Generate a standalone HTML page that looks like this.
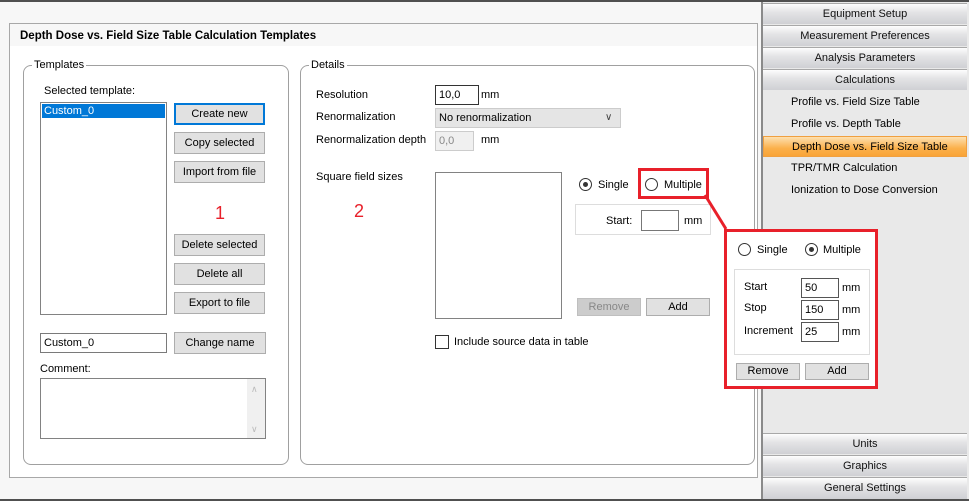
<!DOCTYPE html>
<html><head><meta charset="utf-8"><style>
*{box-sizing:border-box;margin:0;padding:0}
body{width:969px;height:501px;overflow:hidden;background:#f7f7f7;font-family:"Liberation Sans",sans-serif;font-size:11px;color:#000;position:relative}
.a{position:absolute}
.t{position:absolute;white-space:nowrap;line-height:14px}
.btn{position:absolute;background:#e1e1e1;border:1px solid #adadad;text-align:center;line-height:20px;white-space:nowrap}
.inp{position:absolute;background:#fff;border:1px solid #7a7a7a;padding-left:3px;line-height:19px}
.grp{position:absolute;border:1px solid #a0a0a0;border-radius:8px}
.hd{position:absolute;left:763px;width:204px;height:21px;background:linear-gradient(#fdfdfd,#e4e4e6 40%,#cfd0d4);border-top:1px solid #a8a8a8;text-align:center;line-height:21px;color:#111}
.rad{position:absolute;width:13px;height:13px;border:1px solid #333;border-radius:50%;background:#fff}
.rad.on::after{content:"";position:absolute;left:3px;top:3px;width:5px;height:5px;border-radius:50%;background:#333}
.it{position:absolute;left:791px;line-height:14px;white-space:nowrap}
</style></head><body>
<div class="a" style="left:0;top:0;width:969px;height:2px;background:#505050"></div>
<div class="a" style="left:0;top:499px;width:969px;height:2px;background:#505050"></div>
<div class="a" style="left:9px;top:23px;width:749px;height:455px;background:#fff;border:1px solid #a8a8a8"></div>
<div class="a" style="left:10px;top:24px;width:747px;height:22px;background:#f7f7f7"></div>
<div class="t" style="left:20px;top:29px;font-weight:bold;font-size:11.5px">Depth Dose vs. Field Size Table Calculation Templates</div>
<div class="grp" style="left:23px;top:65px;width:266px;height:400px"></div>
<div class="t" style="left:32px;top:58px;background:#fff;padding:0 2px">Templates</div>
<div class="t" style="left:44px;top:84px">Selected template:</div>
<div class="a" style="left:40px;top:102px;width:127px;height:213px;border:1px solid #828282;background:#fff"></div>
<div class="a" style="left:42px;top:104px;width:123px;height:14px;background:#0078d7"></div>
<div class="t" style="left:44px;top:104px;color:#fff">Custom_0</div>
<div class="btn" style="left:174px;top:103px;width:91px;height:22px;border:2px solid #0078d7;line-height:18px">Create new</div>
<div class="btn" style="left:174px;top:132px;width:91px;height:22px">Copy selected</div>
<div class="btn" style="left:174px;top:161px;width:91px;height:22px">Import from file</div>
<div class="t" style="left:215px;top:203px;color:#e8202a;font-size:18px;line-height:20px">1</div>
<div class="btn" style="left:174px;top:234px;width:91px;height:22px">Delete selected</div>
<div class="btn" style="left:174px;top:263px;width:91px;height:22px">Delete all</div>
<div class="btn" style="left:174px;top:292px;width:91px;height:22px">Export to file</div>
<div class="inp" style="left:40px;top:333px;width:127px;height:20px;line-height:18px">Custom_0</div>
<div class="btn" style="left:174px;top:332px;width:92px;height:22px">Change name</div>
<div class="t" style="left:40px;top:362px">Comment:</div>
<div class="a" style="left:40px;top:378px;width:226px;height:61px;border:1px solid #828282;background:#fff"></div>
<div class="a" style="left:247px;top:379px;width:18px;height:59px;background:#f0f0f0"></div>
<div class="t" style="left:251px;top:382px;color:#bbb;font-size:9px">&#8743;</div>
<div class="t" style="left:251px;top:422px;color:#bbb;font-size:9px">&#8744;</div>
<div class="grp" style="left:300px;top:65px;width:455px;height:400px"></div>
<div class="t" style="left:309px;top:58px;background:#fff;padding:0 2px">Details</div>
<div class="t" style="left:316px;top:88px">Resolution</div>
<div class="inp" style="left:435px;top:85px;width:44px;height:20px;border-color:#333;line-height:18px">10,0</div>
<div class="t" style="left:481px;top:88px">mm</div>
<div class="t" style="left:316px;top:110px">Renormalization</div>
<div class="a" style="left:435px;top:108px;width:186px;height:20px;background:#e5e5e5;border:1px solid #ccc"></div>
<div class="t" style="left:439px;top:111px">No renormalization</div>
<div class="t" style="left:605px;top:111px;font-size:10px;color:#444">&#8744;</div>
<div class="t" style="left:316px;top:133px">Renormalization depth</div>
<div class="inp" style="left:435px;top:131px;width:39px;height:20px;background:#f0f0f0;border-color:#ccc;color:#888;line-height:18px">0,0</div>
<div class="t" style="left:481px;top:133px">mm</div>
<div class="t" style="left:316px;top:170px">Square field sizes</div>
<div class="t" style="left:354px;top:201px;color:#e8202a;font-size:18px;line-height:20px">2</div>
<div class="a" style="left:435px;top:172px;width:127px;height:147px;border:1px solid #828282;background:#fff"></div>
<div class="rad on" style="left:579px;top:178px"></div>
<div class="t" style="left:598px;top:178px">Single</div>
<div class="rad" style="left:645px;top:178px"></div>
<div class="t" style="left:664px;top:178px">Multiple</div>
<div class="a" style="left:638px;top:168px;width:71px;height:31px;border:3px solid #e8202a"></div>
<div class="a" style="left:575px;top:204px;width:136px;height:31px;border:1px solid #ddd"></div>
<div class="t" style="left:606px;top:214px">Start:</div>
<div class="inp" style="left:641px;top:210px;width:38px;height:21px;border-color:#777"></div>
<div class="t" style="left:684px;top:214px">mm</div>
<div class="btn" style="left:577px;top:298px;width:64px;height:18px;line-height:16px;background:#ccc;border-color:#bfbfbf;color:#888">Remove</div>
<div class="btn" style="left:646px;top:298px;width:64px;height:18px;line-height:16px">Add</div>
<div class="a" style="left:435px;top:335px;width:14px;height:14px;border:1px solid #333;background:#fff"></div>
<div class="t" style="left:454px;top:335px">Include source data in table</div>
<svg class="a" style="left:700px;top:193px" width="30" height="40"><line x1="5" y1="2" x2="26" y2="36" stroke="#e8202a" stroke-width="3"/></svg>
<div class="a" style="left:761px;top:2px;width:208px;height:497px;background:#e9e9e9;border-left:2px solid #8a8a8a"></div>
<div class="hd" style="top:3px">Equipment Setup</div>
<div class="hd" style="top:25px">Measurement Preferences</div>
<div class="hd" style="top:47px">Analysis Parameters</div>
<div class="hd" style="top:69px">Calculations</div>
<div class="it" style="top:95px">Profile vs. Field Size Table</div>
<div class="it" style="top:117px">Profile vs. Depth Table</div>
<div class="a" style="left:763px;top:136px;width:204px;height:21px;background:linear-gradient(#fde0b0,#fbb04a 60%,#f9a437);border:1px solid #f0a040"></div>
<div class="it" style="top:140px;left:792px">Depth Dose vs. Field Size Table</div>
<div class="it" style="top:161px">TPR/TMR Calculation</div>
<div class="it" style="top:183px">Ionization to Dose Conversion</div>
<div class="hd" style="top:433px">Units</div>
<div class="hd" style="top:455px">Graphics</div>
<div class="hd" style="top:477px;height:22px">General Settings</div>
<div class="a" style="left:724px;top:229px;width:154px;height:160px;border:3px solid #e8202a;background:#fff"></div>
<div class="rad" style="left:738px;top:243px"></div>
<div class="t" style="left:757px;top:243px">Single</div>
<div class="rad on" style="left:805px;top:243px"></div>
<div class="t" style="left:823px;top:243px">Multiple</div>
<div class="a" style="left:734px;top:269px;width:136px;height:86px;border:1px solid #ddd"></div>
<div class="t" style="left:744px;top:280px">Start</div>
<div class="inp" style="left:801px;top:278px;width:38px;height:20px;border-color:#555;line-height:18px">50</div>
<div class="t" style="left:842px;top:281px">mm</div>
<div class="t" style="left:744px;top:301px">Stop</div>
<div class="inp" style="left:801px;top:300px;width:38px;height:20px;border-color:#555;line-height:18px">150</div>
<div class="t" style="left:842px;top:303px">mm</div>
<div class="t" style="left:744px;top:324px">Increment</div>
<div class="inp" style="left:801px;top:322px;width:38px;height:20px;border-color:#555;line-height:18px">25</div>
<div class="t" style="left:842px;top:325px">mm</div>
<div class="btn" style="left:736px;top:363px;width:64px;height:17px;line-height:15px">Remove</div>
<div class="btn" style="left:805px;top:363px;width:64px;height:17px;line-height:15px">Add</div>
</body></html>
